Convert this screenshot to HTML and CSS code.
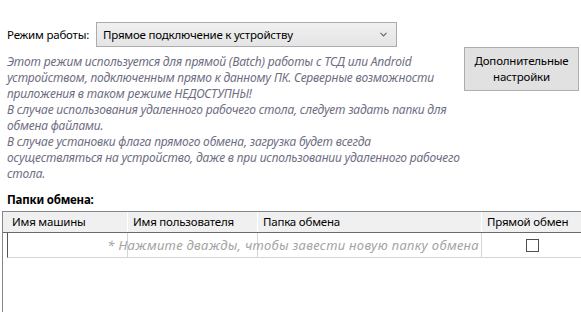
FILE: index.html
```html
<!DOCTYPE html>
<html lang="ru">
<head>
<meta charset="utf-8">
<link rel="stylesheet" href="styles.css">
</head>
<body>
<div class="page">
  <div class="mode-row">
    <span class="label">Режим работы:</span>
    <div class="combo">
      <span class="combo-text">Прямое подключение к устройству</span>
      <svg class="chev" width="7" height="5" viewBox="0 0 7 5"><path d="M0.5 0.8 L3.5 3.8 L6.5 0.8" fill="none" stroke="#6a6a6a" stroke-width="1.2"/></svg>
    </div>
  </div>
  <div class="info-row">
    <p class="info">Этот режим используется для прямой (Batch) работы с ТСД или Android<br>устройством, подключенным прямо к данному ПК. Серверные возможности<br>приложения в таком режиме НЕДОСТУПНЫ!<br>В случае использования удаленного рабочего стола, следует задать папки для<br>обмена файлами.<br>В случае установки флага прямого обмена, загрузка будет всегда<br>осуществляться на устройство, даже в при использовании удаленного рабочего<br>стола.</p>
    <button class="btn">Дополнительные<br>настройки</button>
  </div>
  <div class="section-title">Папки обмена:</div>
  <div class="grid">
    <div class="grid-head">
      <div class="rh"></div>
      <div class="hc c1">Имя машины</div>
      <div class="hc c2">Имя пользователя</div>
      <div class="hc c3">Папка обмена</div>
      <div class="hc c4">Прямой обмен</div>
    </div>
    <div class="grid-row">
      <div class="rh"></div>
      <div class="cells">
        <div class="cell c1"></div>
        <div class="cell c2"></div>
        <div class="cell c3"></div>
        <div class="cell c4"><span class="check"></span></div>
        <span class="placeholder">* Нажмите дважды, чтобы завести новую папку обмена</span>
      </div>
    </div>
  </div>
</div>
</body>
</html>
```

FILE: styles.css
```css
html, body {
  margin: 0;
  padding: 0;
  background: #ffffff;
  overflow: hidden;
}
body {
  font-family: "Noto Sans", "Open Sans", sans-serif;
  font-size: 11.5px;
  letter-spacing: -0.2px;
  color: #000;
  width: 581px;
  height: 312px;
}
.page {
  display: flex;
  flex-direction: column;
  padding-top: 22px;
}
.mode-row {
  display: flex;
  align-items: center;
  padding-left: 7px;
  height: 25px;
}
.label {
  width: 89px;
  line-height: 16px;
}
.combo {
  box-sizing: border-box;
  width: 301px;
  height: 25px;
  border: 1px solid #acacac;
  background: linear-gradient(#f0f0f0, #e5e5e5);
  display: flex;
  align-items: center;
  justify-content: space-between;
  padding: 0 9px 0 6px;
}
.combo-text {
  line-height: 16px;
}
.info-row {
  display: flex;
  justify-content: space-between;
  padding-left: 7px;
  padding-right: 2px;
}
.info {
  flex: 1;
  min-width: 0;
  margin: 7px 0 0 0;
  font-style: italic;
  font-size: 12px;
  letter-spacing: -0.18px;
  color: #6e6e82;
  line-height: 16px;
  white-space: nowrap;
}
.btn {
  flex-shrink: 0;
  box-sizing: border-box;
  width: 115px;
  height: 44px;
  margin: 0;
  padding: 0;
  border: 1px solid #adadad;
  background: #e1e1e1;
  font-family: inherit;
  font-size: 11.5px;
  letter-spacing: -0.2px;
  line-height: 16px;
  color: #000;
}
.section-title {
  font-weight: bold;
  padding-left: 7px;
  line-height: 16px;
  margin-top: 10px;
}
.grid {
  margin-top: 3px;
  margin-left: 2px;
  width: 620px;
  height: 110px;
  border-left: 1px solid #828790;
  border-top: 1px solid #828790;
  box-sizing: border-box;
}
.grid-head {
  display: flex;
  height: 21px;
  background: #f0f0f0;
  border-bottom: 1px solid #6a6a6a;
  box-sizing: border-box;
}
.grid-head .rh {
  width: 4px;
}
.hc {
  box-sizing: border-box;
  padding-left: 5px;
  line-height: 20px;
  border-right: 1px solid #ffffff;
  white-space: nowrap;
}
.c1 { width: 121px; }
.c2 { width: 130px; }
.c3 { width: 224px; }
.c4 { width: 130px; }
.grid-row {
  display: flex;
  height: 25px;
}
.grid-row .rh {
  width: 4px;
}
.cells {
  position: relative;
  display: flex;
  border-left: 1px solid #555555;
  border-bottom: 1px solid #d5d5d5;
  box-sizing: border-box;
  height: 25px;
}
.cell {
  box-sizing: border-box;
  height: 24px;
  border-right: 1px solid #d5d5d5;
}
.cells .c1 { width: 120px; }
.cell.c4 {
  display: flex;
  align-items: center;
  padding-left: 44px;
}
.check {
  display: block;
  width: 13px;
  height: 13px;
  box-sizing: border-box;
  border: 1px solid #4f4f4f;
  background: #fff;
}
.placeholder {
  position: absolute;
  right: 133px;
  top: 0;
  line-height: 24px;
  font-style: italic;
  color: #a3a3a3;
  white-space: nowrap;
  font-size: 13px;
  letter-spacing: 0.3px;
}
```
